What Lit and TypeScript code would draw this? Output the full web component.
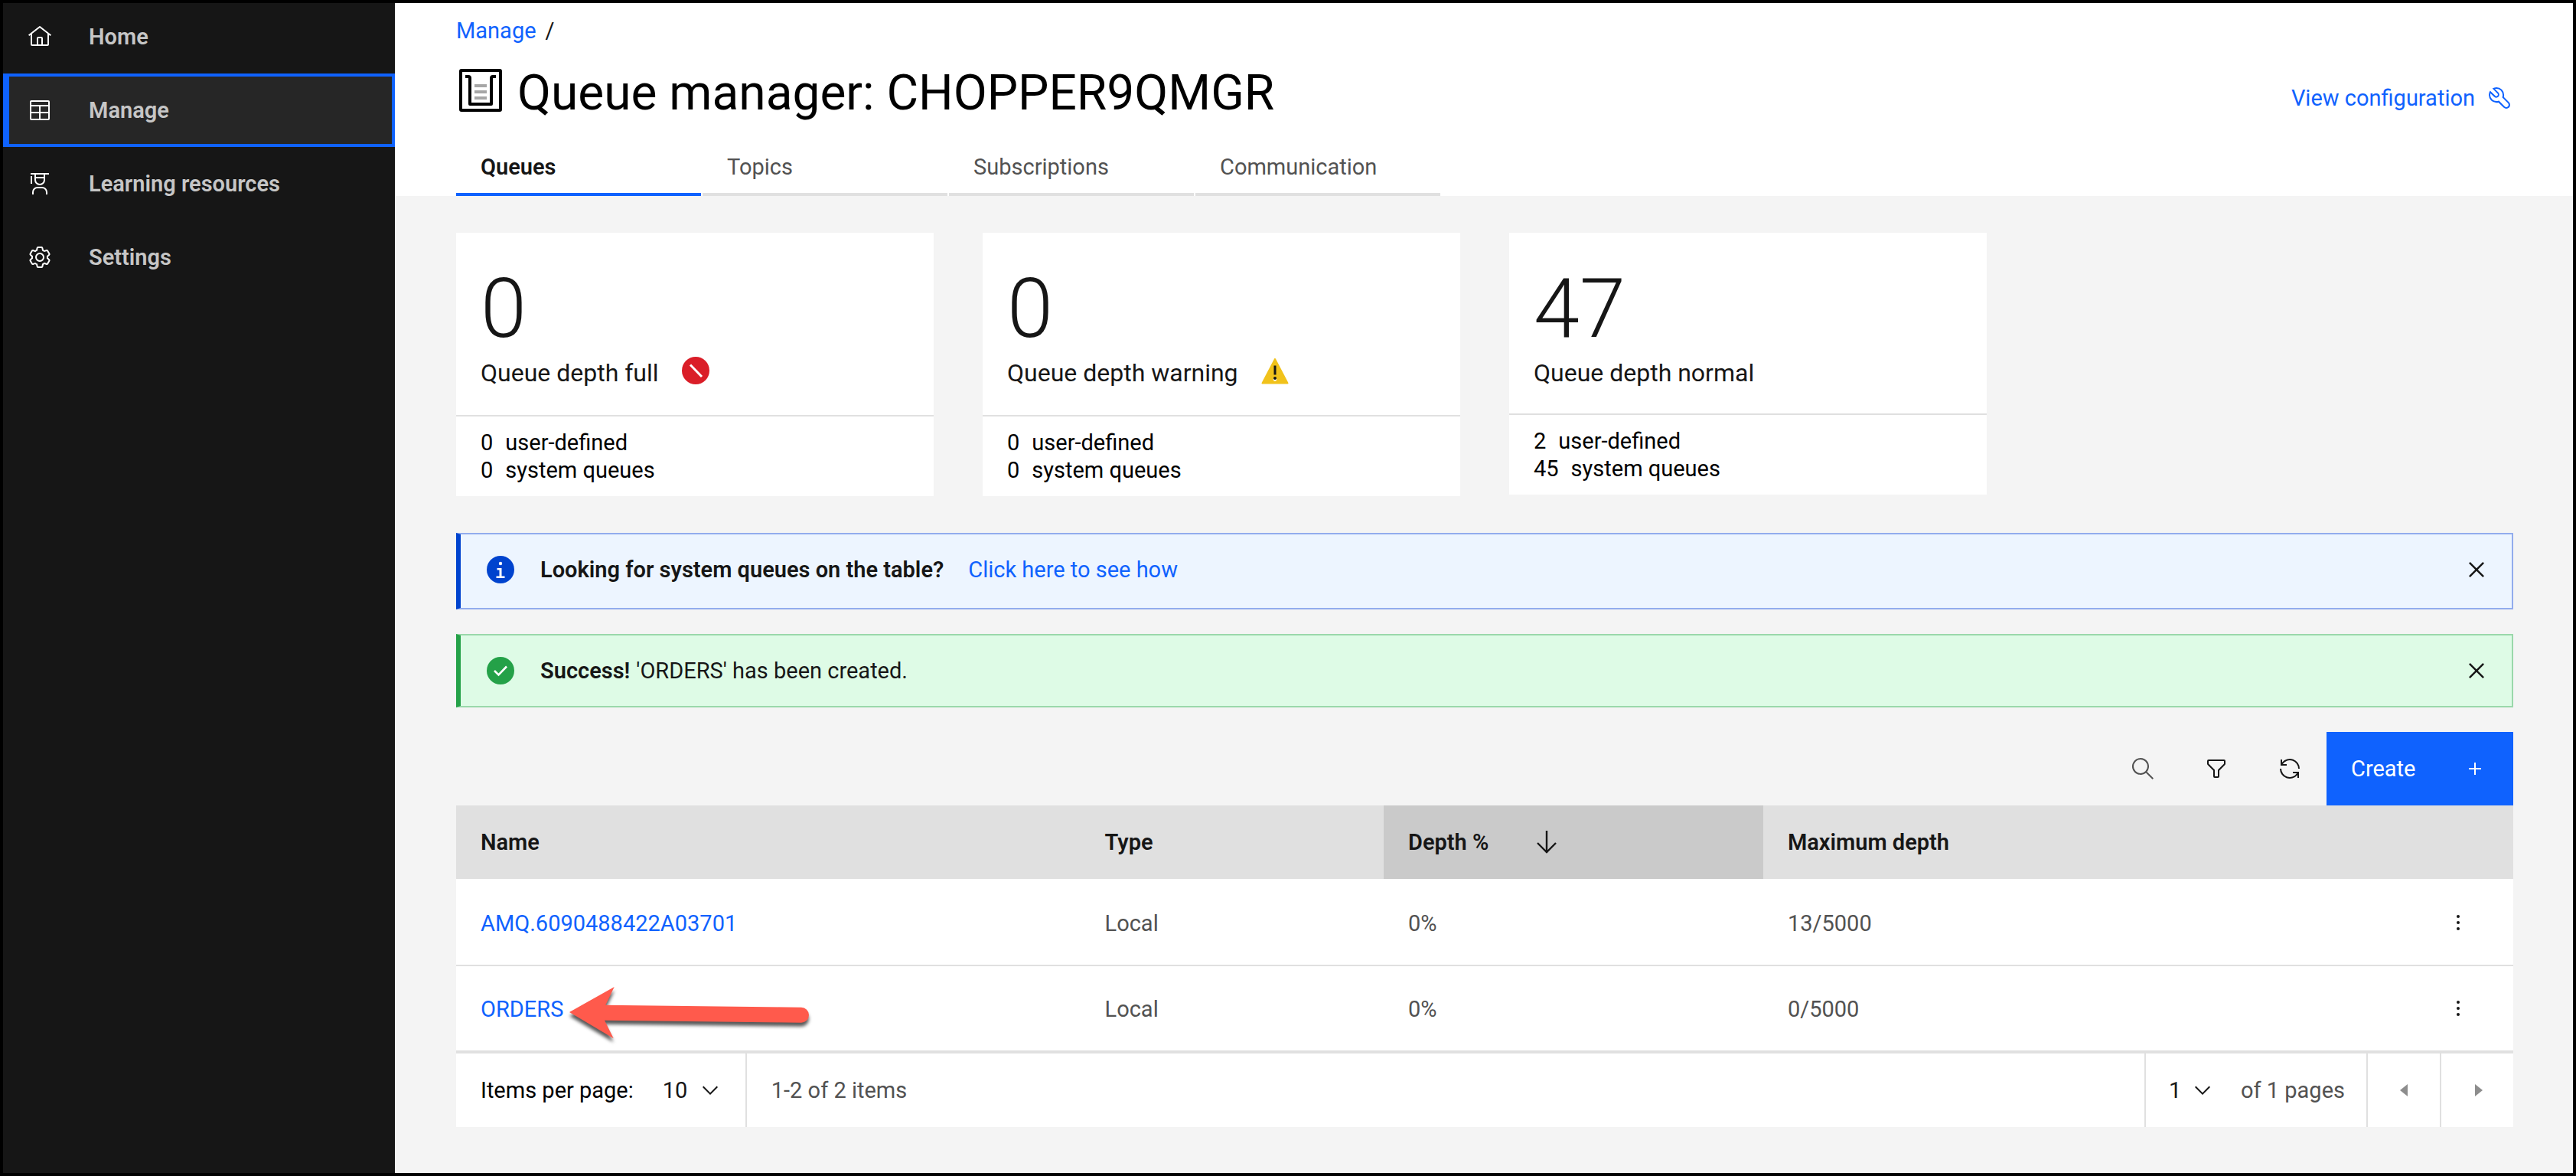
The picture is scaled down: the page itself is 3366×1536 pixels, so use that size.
import { LitElement, html, svg, css, nothing } from "lit";
import { customElement, property, state } from "lit/decorators.js";
import { classMap } from "lit/directives/class-map.js";

const ICONS = {
  home: svg`<path d="M16.6123,2.2138a1.01,1.01,0,0,0-1.2427,0L1,13.4194l1.2427,1.5717L4,13.621V26a2.0041,2.0041,0,0,0,2,2H26a2.0037,2.0037,0,0,0,2-2V13.63L29.7573,15,31,13.4282ZM18,26H14V18h4Zm2,0V18a2.0023,2.0023,0,0,0-2-2H14a2.002,2.002,0,0,0-2,2v8H6V12.0615l10-7.79,10,7.8005V26Z"/>`,
  table: svg`<g fill="none" stroke="currentColor" stroke-width="2"><rect x="4" y="4" width="24" height="24" rx="1"/><path d="M4 10H28M4 19H28M16 10V28"/></g>`,
  education: svg`<path d="M26,30H24V27a5.0059,5.0059,0,0,0-5-5H13a5.0059,5.0059,0,0,0-5,5v3H6V27a7.0082,7.0082,0,0,1,7-7h6a7.0082,7.0082,0,0,1,7,7Z"/><path d="M4,6H6V16H4Z"/><path d="M4,2V4H9v7a7,7,0,0,0,14,0V4h5V2Zm7,2H21V7H11Zm5,12a5,5,0,0,1-5-5V9H21v2A5.0059,5.0059,0,0,1,16,16Z"/>`,
  settings: svg`<path d="M27,16.76c0-.25,0-.5,0-.76s0-.51,0-.77l1.92-1.68A2,2,0,0,0,29.3,11L26.94,7a2,2,0,0,0-1.73-1,2,2,0,0,0-.64.1l-2.43.82a11.35,11.35,0,0,0-1.31-.75l-.51-2.52a2,2,0,0,0-2-1.61H13.64a2,2,0,0,0-2,1.61l-.51,2.52a11.48,11.48,0,0,0-1.32.75L7.43,6.06A2,2,0,0,0,6.79,6,2,2,0,0,0,5.06,7L2.7,11a2,2,0,0,0,.41,2.51L5,15.24c0,.25,0,.5,0,.76s0,.51,0,.77L3.11,18.45A2,2,0,0,0,2.7,21L5.06,25a2,2,0,0,0,1.73,1,2,2,0,0,0,.64-.1l2.43-.82a11.35,11.35,0,0,0,1.31.75l.51,2.52a2,2,0,0,0,2,1.61h4.72a2,2,0,0,0,2-1.61l.51-2.52a11.48,11.48,0,0,0,1.32-.75l2.42.82a2,2,0,0,0,.64.1,2,2,0,0,0,1.73-1L29.3,21a2,2,0,0,0-.41-2.51ZM25.21,24l-3.43-1.16a8.86,8.86,0,0,1-2.71,1.57L18.36,28H13.64l-.71-3.55a9.36,9.36,0,0,1-2.7-1.57L6.79,24,4.43,20l2.72-2.4a8.9,8.9,0,0,1,0-3.13L4.43,12,6.79,8l3.43,1.16a8.86,8.86,0,0,1,2.71-1.57L13.64,4h4.72l.71,3.55a9.36,9.36,0,0,1,2.7,1.57L25.21,8,27.57,12l-2.72,2.4a8.9,8.9,0,0,1,0,3.13L27.57,20Z"/><path d="M16,22a6,6,0,1,1,6-6A5.94,5.94,0,0,1,16,22Zm0-10a3.91,3.91,0,0,0-4,4,3.91,3.91,0,0,0,4,4,3.91,3.91,0,0,0,4-4A3.91,3.91,0,0,0,16,12Z"/>`,
  wrench: svg`<path d="M12.1,2a9.8,9.8,0,0,0-5.4,1.6l6.4,6.4a2.1,2.1,0,0,1,.2,3,2.1,2.1,0,0,1-3-.2L3.7,6.4A9.84,9.84,0,0,0,2,12.1,10.14,10.14,0,0,0,12.1,22.2a10.9,10.9,0,0,0,2.6-.3l6.7,6.7a5,5,0,0,0,7.1-7.1l-6.7-6.7a10.9,10.9,0,0,0,.3-2.6A10,10,0,0,0,12.1,2Zm8,10.1a7.61,7.61,0,0,1-.3,2.1l-.3,1.1.8.8,6.7,6.7a2.88,2.88,0,0,1,.9,2.1A2.72,2.72,0,0,1,27,27a2.9,2.9,0,0,1-4.2,0l-6.7-6.7-.8-.8-1.1.3a7.61,7.61,0,0,1-2.1.3,8.27,8.27,0,0,1-5.7-2.3A7.63,7.63,0,0,1,4,12.1a8.33,8.33,0,0,1,.3-2.2l4.4,4.4a4.14,4.14,0,0,0,5.9.2,4.14,4.14,0,0,0-.2-5.9L10,4.2a6.45,6.45,0,0,1,2-.3,8.27,8.27,0,0,1,5.7,2.3A8.49,8.49,0,0,1,20.1,12.1Z"/>`,
  search: svg`<path d="M30,28.5859l-8.5521-8.5521a11.0177,11.0177,0,1,0-1.4141,1.4141L28.5859,30ZM4,13a9,9,0,1,1,9,9A9.01,9.01,0,0,1,4,13Z"/>`,
  filter: svg`<path d="M18,28H14a2,2,0,0,1-2-2V18.41L4.59,11A2,2,0,0,1,4,9.59V6A2,2,0,0,1,6,4H26a2,2,0,0,1,2,2V9.59A2,2,0,0,1,27.41,11L20,18.41V26A2,2,0,0,1,18,28ZM6,6V9.59l8,8V26h4V17.59l8-8V6Z"/>`,
  renew: svg`<path d="M12,10H6.78A11,11,0,0,1,27,16h2A13,13,0,0,0,6,7.68V4H4v8h8Z"/><path d="M20,22h5.22A11,11,0,0,1,5,16H3a13,13,0,0,0,23,8.32V28h2V20H20Z"/>`,
  close: svg`<path d="M24 9.4 22.6 8 16 14.6 9.4 8 8 9.4 14.6 16 8 22.6 9.4 24 16 17.4 22.6 24 24 22.6 17.4 16Z"/>`,
  add: svg`<path d="M17 15V8H15V15H8V17H15V24H17V17H24V15Z"/>`,
  sort: svg`<path d="M16 1V30M4 17 16 29 28 17" fill="none" stroke="currentColor" stroke-width="2.4"/>`,
  kebab: svg`<circle cx="16" cy="8" r="2"/><circle cx="16" cy="16" r="2"/><circle cx="16" cy="24" r="2"/>`,
  chevron: svg`<path d="M16 22 6 12 7.4 10.6 16 19.200 24.6 10.6 26 12Z"/>`,
  caretLeft: svg`<path d="M21 8 11 16 21 24Z"/>`,
  caretRight: svg`<path d="M13 8 23 16 13 24Z"/>`,
};

type IconName = keyof typeof ICONS;

const icon = (name: IconName, size = "") =>
  html`<svg class="icon ${size}" viewBox="0 0 32 32" fill="currentColor" aria-hidden="true">${ICONS[name]}</svg>`;

const statusIcon = (kind: string) => {
  const shape = {
    full: svg`<circle cx="20" cy="20" r="18" fill="#da1e28"/><path d="M13 12.500 28 28" stroke="#fff" stroke-width="3"/>`,
    warning: svg`<path d="M20 5 3.500 36.500H36.500Z" fill="#f1c21b" stroke="#f1c21b" stroke-width="2" stroke-linejoin="round"/><circle cx="20" cy="31.500" r="2.200" fill="#fff"/><path d="M18.500 13.500H21.500V25.500H18.500Z" fill="#161616"/><circle cx="20" cy="30" r="2" fill="#161616"/>`,
    info: svg`<circle cx="20" cy="20" r="18" fill="#0043ce"/><circle cx="20" cy="12" r="2.200" fill="#fff"/><path d="M15.500 18H21.500V28.500H25.500V31H14.500V28.500H18.500V20.500H15.500Z" fill="#fff"/>`,
    success: svg`<circle cx="20" cy="20" r="18" fill="#24a148"/><path d="M12 20 17.500 25.500 28 14.500" fill="none" stroke="#fff" stroke-width="2.600"/>`,
  }[kind];
  return html`<svg class="icon large" viewBox="0 0 40 40" aria-hidden="true">${shape}</svg>`;
};

const shared = css`
  *,
  *::before {
    box-sizing: border-box;
  }
  h1, h2, p, ul {
    margin: 0;
    padding: 0;
  }
  button, select {
    appearance: none;
    margin: 0;
    padding: 0;
    border: 0;
    border-radius: 0;
    background: none;
    color: inherit;
    font: inherit;
    cursor: pointer;
  }
  a {
    color: #0f62fe;
    text-decoration: none;
  }
  .icon {
    display: block;
    flex: none;
    width: 32px;
    height: 32px;
  }
  .icon.large {
    width: 40px;
    height: 40px;
  }
`;

@customElement("depth-card")
export class DepthCard extends LitElement {
  @property({ type: Number }) total = 0;
  @property() label = "";
  @property() status = "";
  @property({ type: Number }) user = 0;
  @property({ type: Number }) system = 0;

  static styles = [
    shared,
    css`
      :host {
        display: block;
        background: #fff;
      }
      .summary {
        padding: 50px 32px 33px;
        color: #161616;
      }
      .total {
        font-size: 108px;
        font-weight: 300;
        line-height: 98px;
      }
      .label {
        display: flex;
        align-items: flex-start;
        gap: 28px;
        min-height: 43px;
        margin-top: 12px;
      }
      .label.flagged {
        min-height: 45px;
      }
      h2 {
        padding-top: 3px;
        font-size: 32px;
        font-weight: 400;
        line-height: 40px;
      }
      .detail {
        padding: 16px 32px;
        border-top: 2px solid #e0e0e0;
        color: #000;
      }
      .detail p {
        display: flex;
        gap: 16px;
      }
    `,
  ];

  render() {
    return html`
      <div class="summary">
        <p class="total">${this.total}</p>
        <div class=${classMap({ label: true, flagged: !!this.status })}>
          <h2>${this.label}</h2>
          ${this.status ? statusIcon(this.status) : nothing}
        </div>
      </div>
      <div class="detail">
        <p><span>${this.user}</span><span>user-defined</span></p>
        <p><span>${this.system}</span><span>system queues</span></p>
      </div>
    `;
  }
}

@customElement("app-root")
export class AppRoot extends LitElement {
  @state() private tab = "Queues";

  private nav: { label: string; icon: IconName }[] = [
    { label: "Home", icon: "home" },
    { label: "Manage", icon: "table" },
    { label: "Learning resources", icon: "education" },
    { label: "Settings", icon: "settings" },
  ];

  private queues = [
    { name: "AMQ.6090488422A03701", type: "Local", depth: "0%", max: "13/5000" },
    { name: "ORDERS", type: "Local", depth: "0%", max: "0/5000", marked: true },
  ];

  static styles = [
    shared,
    css`
      :host {
        display: flex;
        box-sizing: border-box;
        min-height: 100vh;
        border: 4px solid #000;
        background: #f4f4f4;
        color: #161616;
        font-family: Roboto, "Liberation Sans", sans-serif;
        font-size: 29px;
        line-height: 36px;
      }

      .sidebar {
        flex: none;
        width: 512px;
        background: #161616;
      }
      .sidebar ul {
        margin-top: -4px;
        list-style: none;
      }
      .sidebar a {
        display: flex;
        align-items: center;
        gap: 48px;
        height: 96px;
        padding-left: 32px;
        color: #c6c6c6;
        font-weight: 600;
      }
      .sidebar .icon {
        color: #fff;
      }
      .sidebar .current {
        background: #262626;
        box-shadow: inset 0 0 0 4px #0f62fe, inset 8px 0 #0f62fe;
      }

      .page {
        flex: 1;
        min-width: 0;
      }
      .header {
        padding: 18px 78px 0 80px;
        background: #fff;
      }
      .content {
        padding: 48px 78px 60px 80px;
      }
      .crumbs {
        display: flex;
        gap: 12px;
      }
      .title-row {
        display: flex;
        align-items: center;
        gap: 16px;
        margin-top: 24px;
      }
      .title-icon {
        width: 64px;
        height: 64px;
        margin-bottom: 8px;
      }
      h1 {
        color: #000;
        font-size: 64px;
        font-weight: 400;
        line-height: 80px;
      }
      .configure {
        display: flex;
        align-items: center;
        gap: 16px;
        margin: 12px 2px 0 auto;
      }
      .tabs {
        display: flex;
        gap: 2px;
        margin-top: 22px;
      }
      .tab {
        width: 320px;
        height: 72px;
        padding: 0 32px;
        border-bottom: 4px solid #e0e0e0;
        color: #525252;
        text-align: left;
      }
      .tab.selected {
        border-color: #0f62fe;
        color: #161616;
        font-weight: 600;
      }

      .cards {
        display: grid;
        grid-template-columns: repeat(4, 1fr);
        align-items: start;
        gap: 64px;
      }

      .notices {
        display: grid;
        gap: 32px;
        margin: 48px 0 32px;
      }
      .notice {
        display: flex;
        align-items: center;
        padding-left: 32px;
        border: 2px solid;
        border-left: 6px solid;
      }
      .notice.info {
        min-height: 100px;
        padding-bottom: 4px;
        border-color: #92aced #92aced #92aced #0043ce;
        background: #edf5ff;
      }
      .notice.success {
        min-height: 96px;
        border-color: #9ad8aa #9ad8aa #9ad8aa #24a148;
        background: #defbe6;
      }
      .notice strong {
        margin-left: 32px;
        font-weight: 600;
      }
      .notice a {
        margin-left: 32px;
      }
      .notice span {
        margin-left: 8px;
      }
      .notice button {
        display: grid;
        place-items: center;
        width: 92px;
        height: 92px;
        margin-left: auto;
      }

      .toolbar {
        display: flex;
        justify-content: flex-end;
      }
      .tool {
        display: grid;
        place-items: center;
        width: 96px;
        height: 96px;
      }
      .tool.muted {
        color: #525252;
      }
      .create {
        display: flex;
        align-items: center;
        justify-content: space-between;
        width: 244px;
        height: 96px;
        padding: 0 34px 0 32px;
        background: #0f62fe;
        color: #fff;
      }

      table {
        width: 100%;
        border-collapse: separate;
        border-spacing: 0;
        table-layout: fixed;
      }
      .col-name {
        width: 30.34%;
      }
      .col-type {
        width: 14.75%;
      }
      .col-depth {
        width: 18.45%;
      }
      .col-menu {
        width: 144px;
      }
      th {
        height: 96px;
        padding: 0 32px;
        background: #e0e0e0;
        font-weight: 600;
        text-align: left;
      }
      th.sorted {
        background: #cacaca;
      }
      .sort {
        display: flex;
        align-items: center;
        gap: 60px;
      }
      td {
        position: relative;
        padding: 38px 32px 36px;
        border-bottom: 2px solid #e0e0e0;
        background: #fff;
        color: #525252;
      }
      tbody tr:first-child td {
        border-top: 2px solid #fff;
      }
      td.menu {
        padding: 0 32px;
        color: #161616;
      }
      .menu button {
        display: grid;
        place-items: center;
        width: 80px;
        height: 80px;
      }
      .pointer {
        position: absolute;
        top: 18px;
        left: 144px;
        width: 330px;
        height: 96px;
        overflow: visible;
        filter: drop-shadow(0 5px 2px rgba(0, 0, 0, 0.65));
        pointer-events: none;
      }
      td.marked {
        z-index: 1;
      }

      .pagination {
        display: flex;
        align-items: stretch;
        height: 98px;
        border-top: 2px solid #e0e0e0;
        background: #fff;
        color: #525252;
      }
      .pagination > * {
        display: flex;
        align-items: center;
      }
      .size {
        padding-left: 32px;
        border-right: 2px solid #e0e0e0;
        color: #000;
      }
      .picker {
        display: grid;
        align-items: center;
        width: 146px;
        height: 100%;
        color: #161616;
      }
      .picker select {
        grid-area: 1 / 1;
        width: 100%;
        height: 100%;
        padding-left: 38px;
      }
      .picker .icon {
        grid-area: 1 / 1;
        justify-self: end;
        margin-right: 30px;
        pointer-events: none;
      }
      .range {
        flex: 1;
        padding-left: 32px;
      }
      .goto {
        gap: 4px;
        min-width: 290px;
        border-left: 2px solid #e0e0e0;
      }
      .goto .picker {
        width: 120px;
      }
      .goto .picker select {
        padding-left: 30px;
      }
      .step {
        justify-content: center;
        width: 96px;
        border-left: 2px solid #e0e0e0;
        color: #8d8d8d;
      }
    `,
  ];

  private renderHeader() {
    return html`
      <header class="header">
        <nav class="crumbs" aria-label="Breadcrumb"><a href="#manage">Manage</a><span>/</span></nav>
        <div class="title-row">
          <svg class="title-icon" viewBox="0 0 64 64" fill="none" aria-hidden="true">
            <rect x="6" y="6" width="52" height="52" rx="1" stroke="#000" stroke-width="4" />
            <path d="M12 14H16Q18 14 18 16V50H46V16Q46 14 48 14H52" stroke="#000" stroke-width="4" stroke-linejoin="round" />
            <path d="M24 26H40M24 34H40M24 42H40" stroke="#a6a6a6" stroke-width="4" />
          </svg>
          <h1>Queue manager: CHOPPER9QMGR</h1>
          <a class="configure" href="#configuration">View configuration ${icon("wrench")}</a>
        </div>
        <div class="tabs" role="tablist">
          ${["Queues", "Topics", "Subscriptions", "Communication"].map(
            (name) => html`<button
              role="tab"
              class=${classMap({ tab: true, selected: this.tab === name })}
              aria-selected=${this.tab === name ? "true" : "false"}
              @click=${() => (this.tab = name)}
            >${name}</button>`
          )}
        </div>
      </header>
    `;
  }

  private renderTable() {
    return html`
      <table>
        <colgroup>
          <col class="col-name" /><col class="col-type" /><col class="col-depth" /><col /><col class="col-menu" />
        </colgroup>
        <thead>
          <tr>
            <th scope="col">Name</th>
            <th scope="col">Type</th>
            <th scope="col" class="sorted" aria-sort="descending">
              <button class="sort">Depth % ${icon("sort")}</button>
            </th>
            <th scope="col">Maximum depth</th>
            <th></th>
          </tr>
        </thead>
        <tbody>
          ${this.queues.map(
            (q) => html`<tr>
              <td class=${classMap({ marked: !!q.marked })}>
                <a href="#${q.name}">${q.name}</a>
                ${q.marked
                  ? html`<svg class="pointer" viewBox="0 0 330 96" aria-hidden="true">
                      <path fill="#ff5a4c" d="M4 42 62.700 9 51.300 32.700 307 35.700A10 10 0 0 1 307 55.700L50 52.700 61.700 76.300Z" />
                    </svg>`
                  : nothing}
              </td>
              <td>${q.type}</td>
              <td>${q.depth}</td>
              <td>${q.max}</td>
              <td class="menu"><button aria-label="Options for ${q.name}">${icon("kebab")}</button></td>
            </tr>`
          )}
        </tbody>
      </table>
    `;
  }

  private renderPagination() {
    return html`
      <div class="pagination">
        <div class="size">
          <label for="page-size">Items per page:</label>
          <div class="picker"><select id="page-size"><option>10</option></select>${icon("chevron")}</div>
        </div>
        <div class="range">1-2 of 2 items</div>
        <div class="goto">
          <div class="picker"><select id="page" aria-label="Page"><option>1</option></select>${icon("chevron")}</div>
          <label for="page">of 1 pages</label>
        </div>
        <button class="step" aria-label="Previous page">${icon("caretLeft")}</button>
        <button class="step" aria-label="Next page">${icon("caretRight")}</button>
      </div>
    `;
  }

  render() {
    return html`
      <nav class="sidebar" aria-label="Main">
        <ul>
          ${this.nav.map(
            (item) => html`<li>
              <a class=${classMap({ current: item.label === "Manage" })} href="#${item.icon}">${icon(item.icon)}${item.label}</a>
            </li>`
          )}
        </ul>
      </nav>
      <main class="page">
        ${this.renderHeader()}
        <div class="content">
          <div class="cards">
            <depth-card total="0" label="Queue depth full" status="full" user="0" system="0"></depth-card>
            <depth-card total="0" label="Queue depth warning" status="warning" user="0" system="0"></depth-card>
            <depth-card total="47" label="Queue depth normal" user="2" system="45"></depth-card>
          </div>
          <div class="notices">
            <div class="notice info">
              ${statusIcon("info")}<strong>Looking for system queues on the table?</strong>
              <a href="#system-queues">Click here to see how</a>
              <button aria-label="Close information">${icon("close", "large")}</button>
            </div>
            <div class="notice success">
              ${statusIcon("success")}<strong>Success!</strong><span>'ORDERS' has been created.</span>
              <button aria-label="Close success message">${icon("close", "large")}</button>
            </div>
          </div>
          <div class="toolbar">
            <button class="tool muted" aria-label="Search">${icon("search")}</button>
            <button class="tool" aria-label="Filter">${icon("filter")}</button>
            <button class="tool" aria-label="Refresh">${icon("renew")}</button>
            <button class="create">Create ${icon("add")}</button>
          </div>
          ${this.renderTable()} ${this.renderPagination()}
        </div>
      </main>
    `;
  }
}
